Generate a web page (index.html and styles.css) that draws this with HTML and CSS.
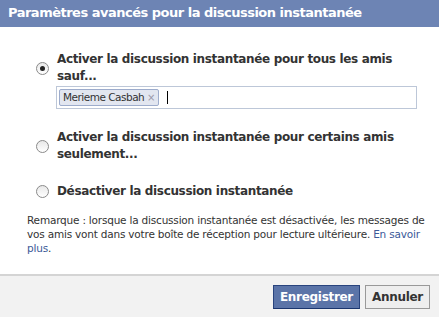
FILE: index.html
```html
<!DOCTYPE html>
<html lang="fr">
<head>
    <meta charset="UTF-8">
    <title>Paramètres avancés pour la discussion instantanée</title>
    <link rel="stylesheet" href="styles.css">
</head>
<body>
    <div class="dialog">
        <h2 class="dialog-title">Paramètres avancés pour la discussion instantanée</h2>
        <div class="dialog-body">
            <label class="option">
                <span class="radio checked"></span>
                <span class="option-text">Activer la discussion instantanée pour tous les amis sauf...</span>
            </label>
            <div class="token-input">
                <span class="token">Merieme Casbah <span class="token-x">×</span></span>
                <span class="caret"></span>
            </div>
            <label class="option">
                <span class="radio"></span>
                <span class="option-text">Activer la discussion instantanée pour certains amis seulement...</span>
            </label>
            <label class="option">
                <span class="radio"></span>
                <span class="option-text">Désactiver la discussion instantanée</span>
            </label>
            <p class="note">Remarque : lorsque la discussion instantanée est désactivée, les messages de<br>vos amis vont dans votre boîte de réception pour lecture ultérieure. <a href="#">En savoir plus</a>.</p>
        </div>
        <div class="dialog-footer">
            <button class="btn btn-primary">Enregistrer</button>
            <button class="btn">Annuler</button>
        </div>
    </div>
</body>
</html>
```

FILE: styles.css
```css
body {
    margin: 0;
    font-family: "DejaVu Sans", sans-serif;
    background-color: #fff;
    color: #333;
}

.dialog {
    width: 439px;
    height: 317px;
    display: flex;
    flex-direction: column;
}

.dialog-title {
    margin: 0;
    height: 27px;
    background-color: #6d84b4;
    color: #fff;
    font-size: 13px;
    font-weight: bold;
    line-height: 25px;
    padding: 0 8px;
    letter-spacing: -0.5px;
}

.dialog-body {
    flex: 1;
    padding: 24px 22px 0 36px;
}

.option {
    display: flex;
    align-items: center;
    margin-bottom: 20px;
}

.radio {
    flex: none;
    width: 11px;
    height: 11px;
    border: 1px solid #8a8a8a;
    border-radius: 50%;
    background: linear-gradient(#e8e8e8, #fff);
    margin: 0 8px 0 0;
    position: relative;
}

.radio.checked::after {
    content: "";
    position: absolute;
    left: 3px;
    top: 3px;
    width: 5px;
    height: 5px;
    border-radius: 50%;
    background-color: #222;
}

.option-text {
    font-size: 12px;
    font-weight: bold;
    line-height: 17px;
    color: #333;
    letter-spacing: -0.35px;
}

.token-input {
    margin: -19px 0 20px 20px;
    height: 21px;
    border: 1px solid #bdc7d8;
    display: flex;
    align-items: center;
    padding-left: 2px;
}

.token {
    background-color: #e2e6f0;
    border: 1px solid #9daccc;
    border-radius: 2px;
    font-size: 10.5px;
    color: #333;
    padding: 0 3px;
    height: 15px;
    line-height: 15px;
    letter-spacing: -0.5px;
}

.token-x {
    color: #99a;
    font-size: 10px;
}

.caret {
    width: 1px;
    height: 13px;
    background-color: #000;
    margin-left: 8px;
}

.note {
    margin: -7px -12px 0 -9px;
    font-size: 10.5px;
    line-height: 14px;
    color: #333;
    letter-spacing: -0.2px;
}

.note a {
    color: #3b5998;
    text-decoration: none;
}

.dialog-footer {
    height: 43px;
    box-sizing: border-box;
    border-top: 2px solid #d4d4d4;
    background-color: #f2f2f2;
    display: flex;
    justify-content: flex-end;
    align-items: flex-start;
    gap: 5px;
    padding: 9px 9px 0 0;
}

.btn {
    font-family: "DejaVu Sans", sans-serif;
    font-size: 12px;
    font-weight: bold;
    height: 24px;
    padding: 0 6px;
    border: 1px solid #999;
    background-color: #eee;
    color: #333;
    letter-spacing: -0.3px;
}

.btn-primary {
    background-color: #5b74a8;
    border-color: #29447e #29447e #1a356e;
    color: #fff;
}
```
